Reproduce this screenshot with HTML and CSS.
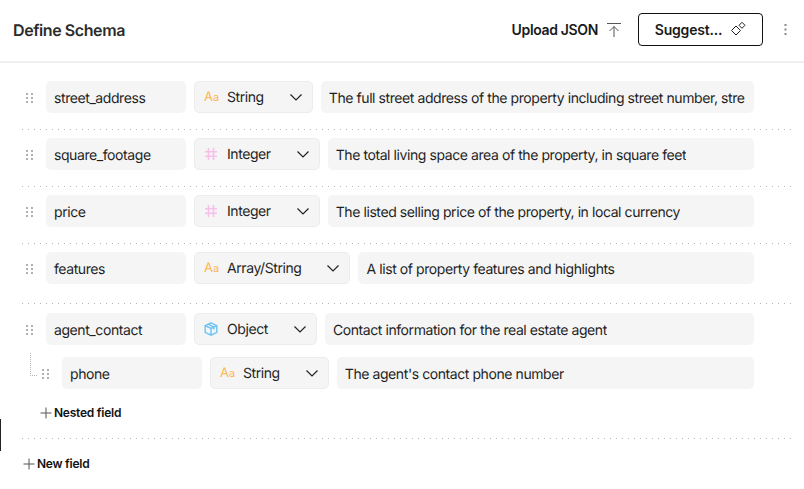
FILE: index.html
```html
<!DOCTYPE html>
<html lang="en">
<head>
<meta charset="utf-8">
<title>Define Schema</title>
<link rel="stylesheet" href="styles.css">
</head>
<body>
<svg class="defs" width="0" height="0" aria-hidden="true">
  <defs>
    <symbol id="grip" viewBox="0 0 7 10"><path fill="#b0b0b0" d="M0 0h2v2H0zM5 0h2v2H5zM0 4h2v2H0zM5 4h2v2H5zM0 8h2v2H0zM5 8h2v2H5z"/></symbol>
    <symbol id="chev" viewBox="0 0 14 14"><path fill="none" stroke="#222" stroke-width="1.2" d="M1.5 4.5 7 10l5.500-5.500"/></symbol>
    <symbol id="hash" viewBox="0 0 14 14"><path fill="none" stroke="#f8bfe9" stroke-width="1.6" d="M4.500 1v12M9.500 1v12M1 4.700h12M1 9.300h12"/></symbol>
    <symbol id="box" viewBox="0 0 14 14"><path fill="none" stroke="#6ac4f5" stroke-width="1.400" d="M7 .8 12.800 3.600v6.800L7 13.200 1.200 10.400V3.600zM1.200 3.600 7 6.500l5.800-2.900M7 6.500v6.700M4 2.200l5.800 2.900v2.400"/></symbol>
    <symbol id="plus" viewBox="0 0 12 12"><path fill="none" stroke="#555" stroke-width="1" d="M6 .5v11M.5 6h11"/></symbol>
  </defs>
</svg>
<header class="topbar">
  <h1 class="title">Define Schema</h1>
  <div class="actions">
    <button class="upload">Upload JSON
      <svg class="upload-icon" viewBox="0 0 14 14" width="14" height="14"><path fill="none" stroke="#555" stroke-width="1" d="M0 .5h14M7 14V3.500M2.500 8 7 3.500 11.500 8"/></svg>
    </button>
    <button class="suggest">Suggest...
      <svg class="spark" viewBox="0 0 15 15" width="15" height="15"><path fill="none" stroke="#222" stroke-width="1" d="M5 4 9.500 8.500 5 13 .5 8.500zM11 .3 14 3.300 11 6.300 8 3.300z"/></svg>
    </button>
    <svg class="kebab" viewBox="0 0 3 11" width="3" height="11"><path fill="#8a8a8a" d="M.5 0h2v2h-2zM.5 4.500h2v2h-2zM.5 9h2v2h-2z"/></svg>
  </div>
</header>
<main class="schema">
  <section class="row">
    <div class="field">
      <svg class="grip"><use href="#grip"/></svg>
      <div class="cell name">street_address</div>
      <div class="select"><span class="aa"><span class="big">A</span><span class="small">a</span></span><span class="type">String</span><svg class="chev"><use href="#chev"/></svg></div>
      <div class="cell desc"><span class="clip">The full street address of the property including street number, stre</span></div>
    </div>
  </section>
  <section class="row">
    <div class="field">
      <svg class="grip"><use href="#grip"/></svg>
      <div class="cell name">square_footage</div>
      <div class="select"><svg class="ticon"><use href="#hash"/></svg><span class="type">Integer</span><svg class="chev"><use href="#chev"/></svg></div>
      <div class="cell desc"><span class="clip">The total living space area of the property, in square feet</span></div>
    </div>
  </section>
  <section class="row">
    <div class="field">
      <svg class="grip"><use href="#grip"/></svg>
      <div class="cell name">price</div>
      <div class="select"><svg class="ticon"><use href="#hash"/></svg><span class="type">Integer</span><svg class="chev"><use href="#chev"/></svg></div>
      <div class="cell desc"><span class="clip">The listed selling price of the property, in local currency</span></div>
    </div>
  </section>
  <section class="row row-tall">
    <div class="field">
      <svg class="grip"><use href="#grip"/></svg>
      <div class="cell name">features</div>
      <div class="select"><span class="aa"><span class="big">A</span><span class="small">a</span></span><span class="type">Array/String</span><svg class="chev"><use href="#chev"/></svg></div>
      <div class="cell desc"><span class="clip">A list of property features and highlights</span></div>
    </div>
  </section>
  <section class="row row-object">
    <div class="field">
      <svg class="grip"><use href="#grip"/></svg>
      <div class="cell name">agent_contact</div>
      <div class="select"><svg class="ticon"><use href="#box"/></svg><span class="type">Object</span><svg class="chev"><use href="#chev"/></svg></div>
      <div class="cell desc"><span class="clip">Contact information for the real estate agent</span></div>
    </div>
    <div class="field nested">
      <span class="connector"></span>
      <svg class="grip"><use href="#grip"/></svg>
      <div class="cell name">phone</div>
      <div class="select"><span class="aa"><span class="big">A</span><span class="small">a</span></span><span class="type">String</span><svg class="chev"><use href="#chev"/></svg></div>
      <div class="cell desc"><span class="clip">The agent's contact phone number</span></div>
    </div>
    <button class="add add-nested"><svg class="plus"><use href="#plus"/></svg>Nested field</button>
  </section>
  <button class="add add-new"><svg class="plus"><use href="#plus"/></svg>New field</button>
</main>
<span class="edge"></span>
</body>
</html>
```
FILE: styles.css
```css
* { box-sizing: border-box; }
html, body { margin: 0; padding: 0; }
body {
  width: 804px;
  height: 489px;
  overflow: hidden;
  position: relative;
  background: #fff;
  font-family: Inter, "Liberation Sans", sans-serif;
  font-size: 14px;
  letter-spacing: -0.42px;
  text-rendering: geometricPrecision;
  color: #1f1f1f;
}
.defs { position: absolute; }
button { font: inherit; letter-spacing: inherit; background: none; border: 0; padding: 0; color: inherit; }

.topbar {
  height: 63px;
  border-bottom: 2px solid #f0f0f0;
  display: flex;
  align-items: center;
  justify-content: space-between;
  padding: 0 17px 2px 13px;
}
.title { margin: 0; font-size: 16px; font-weight: 600; letter-spacing: -0.42px; color: #2b2b2b; }
.actions { display: flex; align-items: center; }
.upload {
  display: flex;
  align-items: center;
  gap: 9px;
  font-size: 14px;
  font-weight: 600;
  letter-spacing: -0.35px;
  color: #1a1a1a;
  margin-right: 17px;
}
.suggest {
  width: 125px;
  height: 33px;
  border: 1px solid #111;
  border-radius: 4px;
  display: flex;
  align-items: center;
  justify-content: center;
  gap: 9px;
  font-size: 14px;
  font-weight: 600;
  letter-spacing: -0.2px;
  color: #1a1a1a;
  margin-right: 21px;
}
.kebab { display: block; }

.schema { padding: 10px 10px 0 22px; }
.row {
  padding: 8px 0 17px;
  background: repeating-linear-gradient(to right, #b5b5b5 0 1px, transparent 1px 6px) left bottom / 100% 1px no-repeat;
}
.row-tall { padding-bottom: 20px; }
.row-object { padding-top: 9px; padding-bottom: 19px; }

.field {
  display: flex;
  align-items: center;
  gap: 8px;
  padding-right: 40px;
  position: relative;
}
.grip { width: 7px; height: 10px; margin: 2px 5px 0 4px; flex: none; }
.cell {
  height: 32px;
  background: #f5f5f5;
  border-radius: 5px;
  padding: 2px 8px 0;
  display: flex;
  align-items: center;
}
.name { width: 140px; flex: none; }
.desc { flex: 1; min-width: 0; }
.clip { display: block; overflow: hidden; white-space: nowrap; }
.select {
  height: 32px;
  flex: none;
  background: #f5f5f5;
  border: 1px solid #ececec;
  border-radius: 5px;
  padding: 0 9px;
  display: flex;
  align-items: center;
}
.aa { width: 15px; margin-right: 8px; color: #fdb74d; display: flex; align-items: baseline; line-height: 1; font-weight: 400; letter-spacing: 0; }
.aa .big { font-size: 13px; }
.aa .small { font-size: 11px; margin-left: 0; }
.ticon { width: 14px; height: 14px; margin: 0 9px 0 0; flex: none; }
.type { margin-right: 25px; }
.chev { width: 14px; height: 14px; flex: none; }

.nested { margin: 12px 0 0; padding-left: 16px; }
.connector {
  position: absolute;
  left: 8px;
  top: -4px;
  width: 7px;
  height: 23px;
  border-left: 1px dotted #b5b5b5;
  border-bottom: 1px dotted #b5b5b5;
}
.add {
  display: flex;
  align-items: center;
  gap: 2px;
  font-size: 12px;
  font-weight: 600;
  letter-spacing: -0.25px;
  color: #111;
  line-height: 15px;
}
.plus { width: 12px; height: 12px; margin-top: 1px; flex: none; }
.add-nested { margin: 16px 0 0 18px; }
.add-new { margin: 17px 0 0 1px; }
.edge {
  position: absolute;
  left: 0;
  top: 419px;
  width: 1px;
  height: 32px;
  background: #222;
}
```
